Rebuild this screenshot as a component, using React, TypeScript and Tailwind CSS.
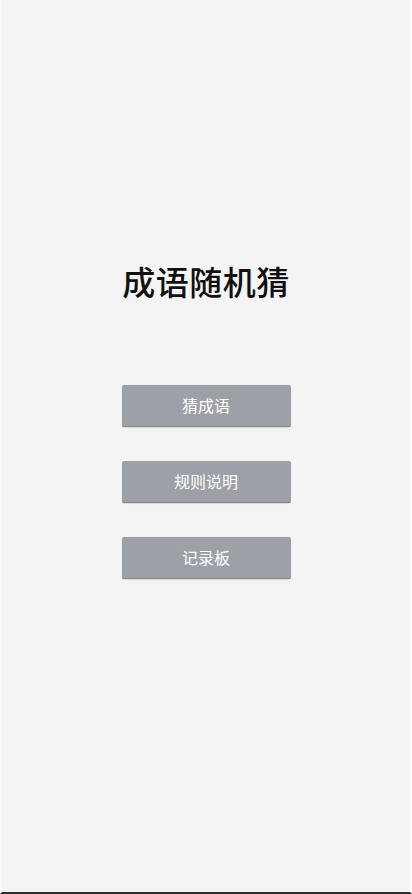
import React from "react";

const font = { fontFamily: '"Noto Sans CJK SC", "Noto Sans", sans-serif' };

export default function App() {
  const items = ["猜成语", "规则说明", "记录板"];
  return (
    <div
      className="h-[894px] w-[412px] bg-[#f4f4f4] flex flex-col items-center border-l-2 border-r-2 border-l-[#f9f9f9] border-r-[#fdfdfd] border-b-2 border-b-[#2e2e2e]"
      style={font}
    >
      <h1 className="mt-[260px] text-[33px] leading-[42px] text-[#111] font-medium tracking-[0.5px]">
        成语随机猜
      </h1>
      <div className="mt-[83px] flex flex-col gap-[34px]">
        {items.map((t) => (
          <button
            key={t}
            className="w-[169px] h-[42px] rounded-[2px] bg-[#9da0a6] border-b border-b-[#85888d] text-white text-[16px] leading-none flex items-center justify-center pb-[2px] shadow-[0_1px_1px_rgba(0,0,0,0.12)]"
          >
            {t}
          </button>
        ))}
      </div>
    </div>
  );
}
